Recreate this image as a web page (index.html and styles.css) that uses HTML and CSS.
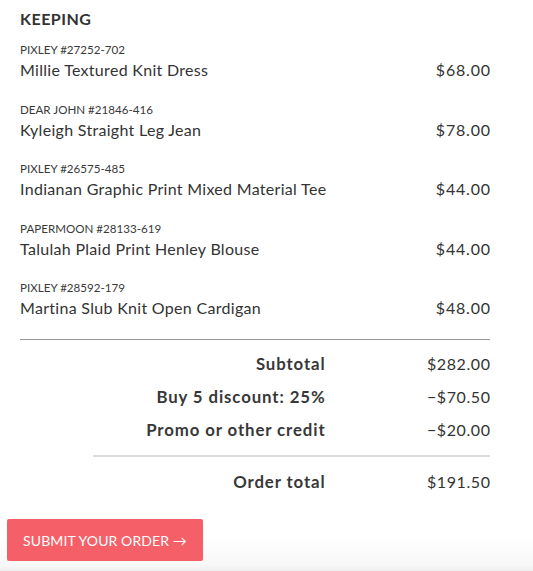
FILE: index.html
```html
<!DOCTYPE html>
<html>
<head>
<meta charset="utf-8">
<link rel="stylesheet" href="styles.css">
</head>
<body>
<div class="page">
  <h2 class="title">KEEPING</h2>
  <ul class="items">
    <li class="item">
      <div class="info"><div class="brand">PIXLEY #27252-702</div><div class="name">Millie Textured Knit Dress</div></div>
      <div class="price">$68.00</div>
    </li>
    <li class="item">
      <div class="info"><div class="brand">DEAR JOHN #21846-416</div><div class="name">Kyleigh Straight Leg Jean</div></div>
      <div class="price">$78.00</div>
    </li>
    <li class="item">
      <div class="info"><div class="brand">PIXLEY #26575-485</div><div class="name">Indianan Graphic Print Mixed Material Tee</div></div>
      <div class="price">$44.00</div>
    </li>
    <li class="item">
      <div class="info"><div class="brand">PAPERMOON #28133-619</div><div class="name">Talulah Plaid Print Henley Blouse</div></div>
      <div class="price">$44.00</div>
    </li>
    <li class="item">
      <div class="info"><div class="brand">PIXLEY #28592-179</div><div class="name">Martina Slub Knit Open Cardigan</div></div>
      <div class="price">$48.00</div>
    </li>
  </ul>
  <div class="summary">
    <div class="row"><span class="label">Subtotal</span><span class="amount">$282.00</span></div>
    <div class="row"><span class="label">Buy 5 discount: 25%</span><span class="amount">&minus;$70.50</span></div>
    <div class="row"><span class="label">Promo or other credit</span><span class="amount">&minus;$20.00</span></div>
  </div>
  <div class="total">
    <div class="row"><span class="label">Order total</span><span class="amount">$191.50</span></div>
  </div>
</div>
<div class="footer">
  <button class="submit">SUBMIT YOUR ORDER <span class="arrow">&rarr;</span></button>
</div>
</body>
</html>
```
FILE: styles.css
```css
* { box-sizing: border-box; }
html, body { margin: 0; padding: 0; background: #fff; }
body {
  font-family: Lato, "Noto Sans", sans-serif;
  color: #333;
  width: 533px;
  height: 571px;
  overflow: hidden;
}
.page { padding: 8px 43px 0 20px; }
.title {
  margin: 0;
  font-size: 16px;
  font-weight: 700;
  letter-spacing: 0.5px;
  line-height: 22px;
  color: #333;
}
.items { list-style: none; margin: 12px 0 0; padding: 0; }
.item {
  display: flex;
  justify-content: space-between;
  align-items: flex-start;
  height: 59.5px;
}
.item:last-child { height: 51px; }
.brand {
  font-size: 11.6px;
  line-height: 16px;
  color: #3a3a3a;
}
.name {
  font-size: 16px;
  line-height: 22px;
  margin-top: 1px;
  letter-spacing: 0.3px;
}
.price {
  font-size: 16px;
  line-height: 22px;
  margin-top: 17px;
  letter-spacing: 0.8px;
  margin-right: -0.8px;
}
.summary {
  border-top: 1px solid #999;
  margin-top: 8px;
  padding-top: 7px;
  padding-bottom: 9px;
}
.row {
  display: flex;
  justify-content: flex-end;
  align-items: center;
  height: 33px;
  font-size: 16px;
}
.label {
  font-weight: 700;
  font-size: 16.8px;
  letter-spacing: 0.9px;
  text-align: right;
  color: #383838;
}
.amount {
  width: 165px;
  text-align: right;
  letter-spacing: 0.6px;
  margin-right: -0.6px;
}
.total {
  margin-left: 73px;
  border-top: 2px solid #dcdcdc;
  padding-top: 8px;
}
.footer {
  position: absolute;
  left: 0; right: 0; bottom: 0;
  height: 65px;
  padding: 13px 0 0 7px;
  background: linear-gradient(#fff 0, #fff 30px, #f7f7f7 60px, #eee 65px);
}
.submit {
  display: block;
  width: 196px;
  height: 42px;
  border: none;
  border-radius: 2px;
  background: #f55f67;
  color: #fff;
  font-family: Lato, "Noto Sans", sans-serif;
  font-size: 14px;
  padding: 0;
  letter-spacing: 0.1px;
  text-align: center;
}
```
